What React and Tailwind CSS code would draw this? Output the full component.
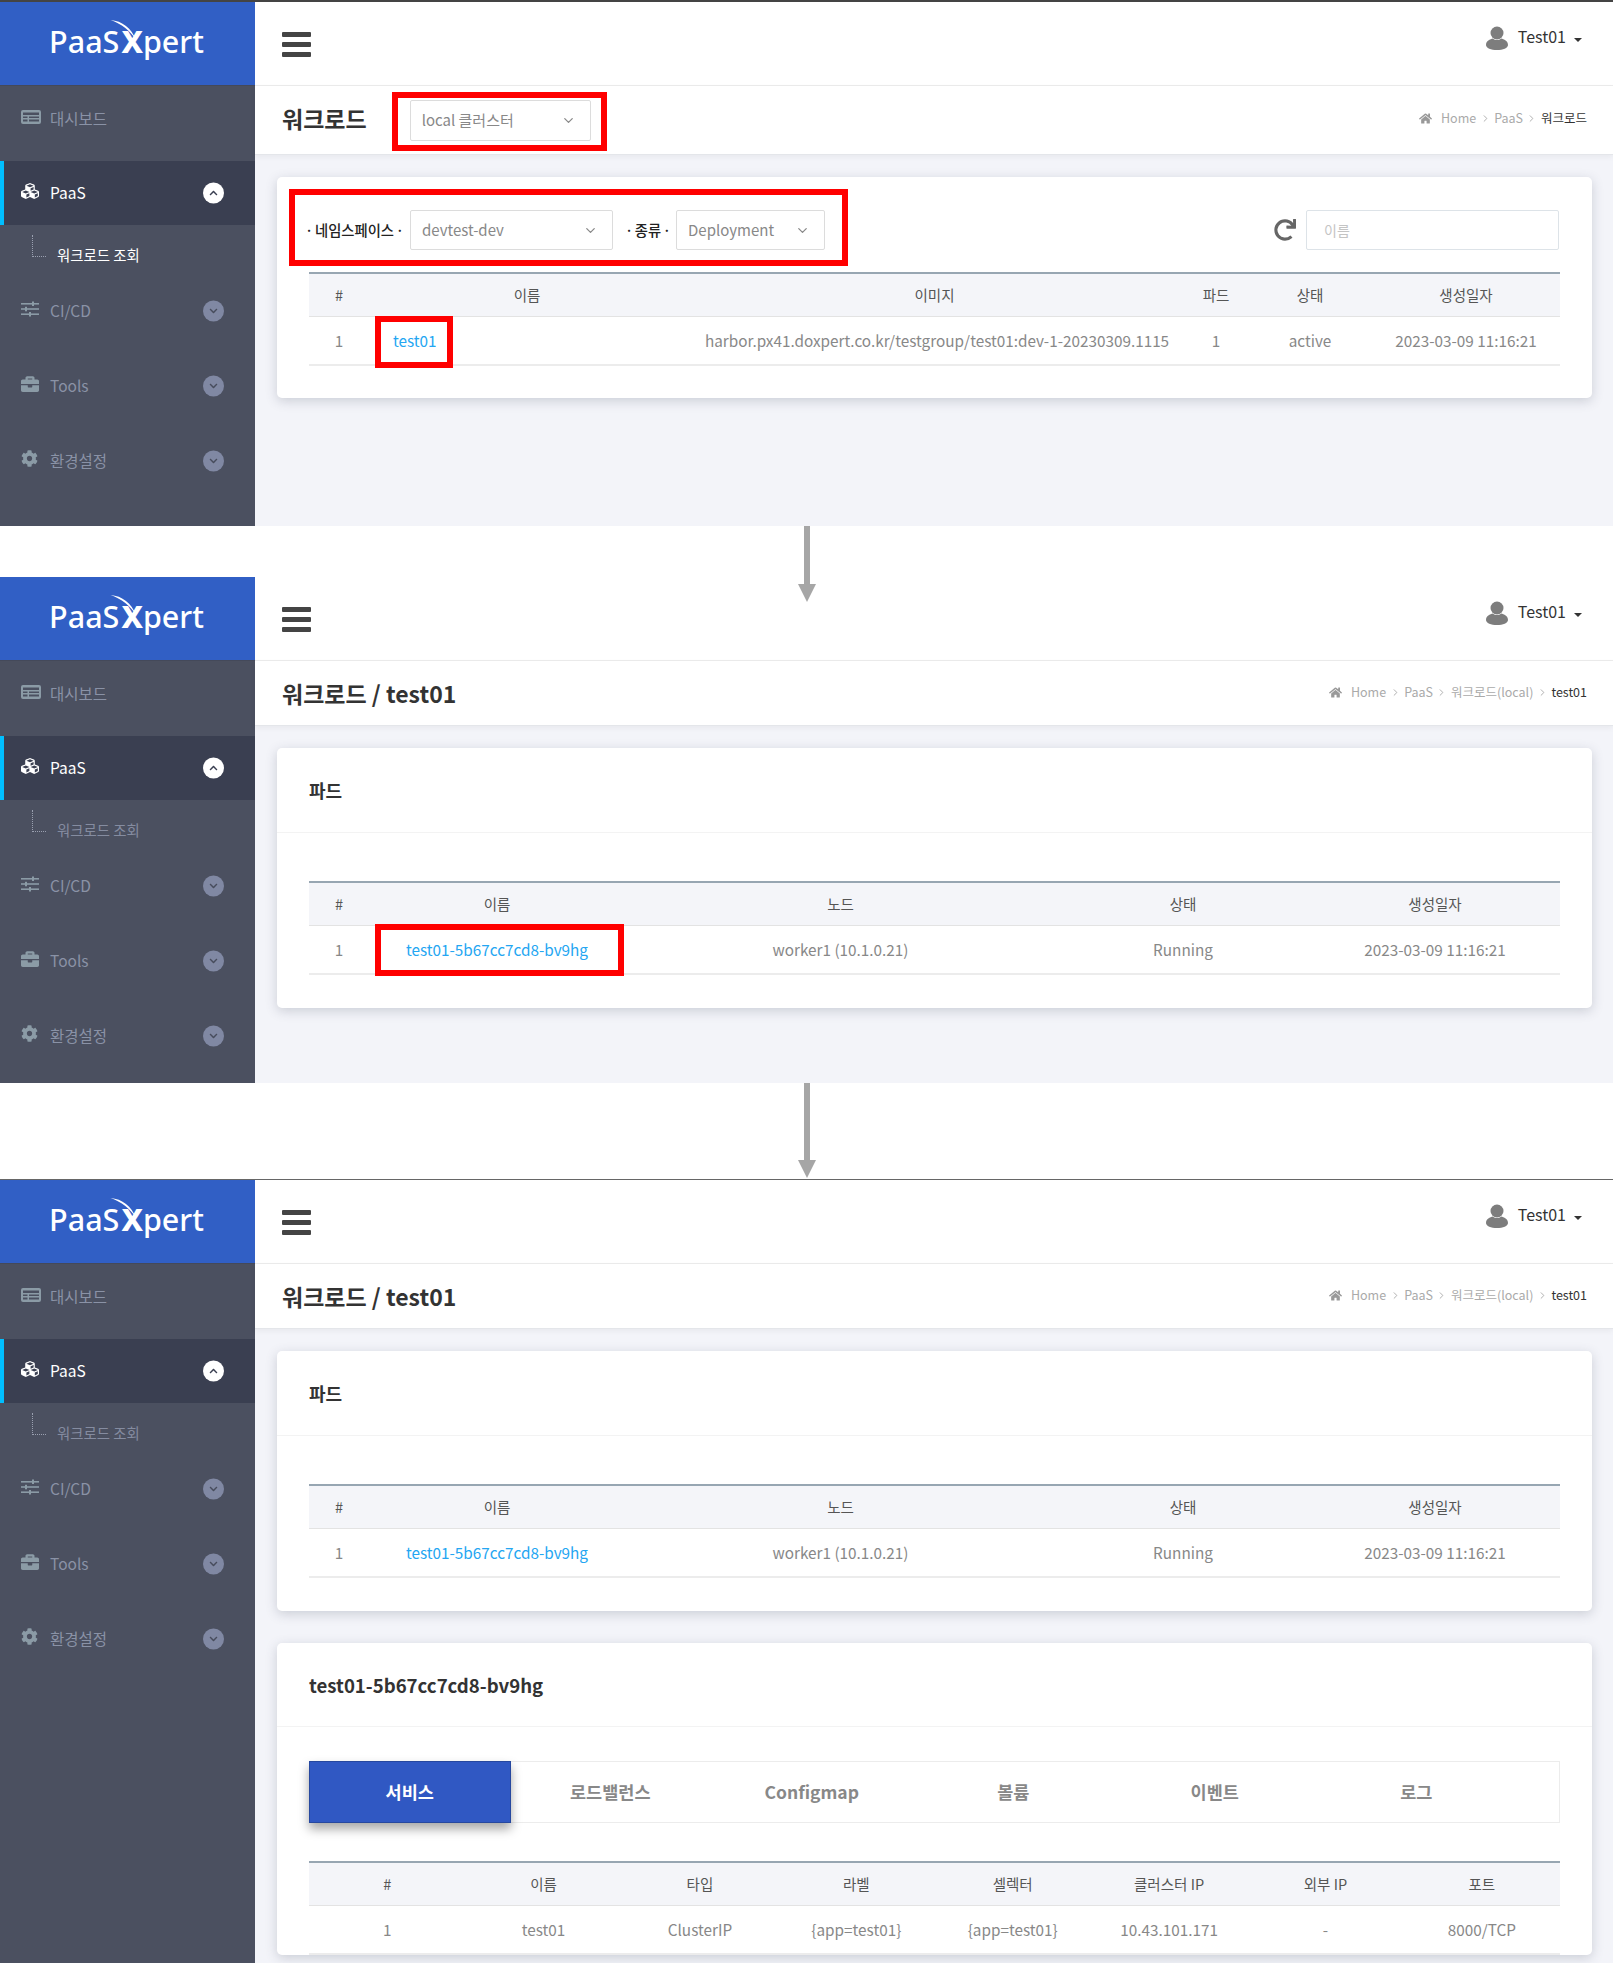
import React from 'react';
import { FaCubes, FaBriefcase, FaCog, FaHome, FaRedo, FaChevronUp, FaChevronDown } from 'react-icons/fa';
import { FiChevronDown, FiChevronRight } from 'react-icons/fi';

const POD_NAME = 'test01-5b67cc7cd8-bv9hg';

function RedFrame({ className }) {
  return <div className={`absolute border-[6px] border-[#ff0000] pointer-events-none z-10 ${className}`} />;
}

function Logo() {
  return (
    <div className="relative flex items-baseline font-['Noto_Sans',sans-serif] text-white text-[30.5px] font-medium leading-none">
      <span>PaaS</span>
      <span className="font-extrabold text-[31px] ml-[2px]">X</span>
      <span>pert</span>
      <svg className="absolute left-[60px] -top-[7px]" width="34" height="22" viewBox="0 0 36 24">
        <path d="M1 1 C 14 2, 24 10, 29 23 C 23 13, 13 5, 1 1 Z" fill="white" />
      </svg>
    </div>
  );
}

function BoardIcon() {
  return (
    <svg width="20" height="14" viewBox="0 0 20 14" fill="currentColor">
      <path fillRule="evenodd" d="M2 0 H18 A2 2 0 0 1 20 2 V12 A2 2 0 0 1 18 14 H2 A2 2 0 0 1 0 12 V2 A2 2 0 0 1 2 0 Z M2 2.5 V5 H18 V2.5 Z M2 6.5 V8 H6.5 V6.5 Z M8 6.5 V8 H18 V6.5 Z M2 9.5 V11.5 H6.5 V9.5 Z M8 9.5 V11.5 H18 V9.5 Z" />
    </svg>
  );
}

function SlidersIcon() {
  return (
    <svg width="18" height="16" viewBox="0 0 18 16" fill="currentColor">
      <rect x="0" y="2" width="18" height="1.6" />
      <rect x="11" y="0.5" width="2" height="4.5" />
      <rect x="0" y="7.2" width="18" height="1.6" />
      <rect x="4" y="5.8" width="2" height="4.5" />
      <rect x="0" y="12.4" width="18" height="1.6" />
      <rect x="8" y="11" width="2" height="4.5" />
    </svg>
  );
}

function NavChevron() {
  return (
    <span className="absolute left-[203px] top-1/2 -translate-y-1/2 w-[21px] h-[21px] rounded-full flex items-center justify-center bg-[#8088a3] text-[#474c5c]">
      <FaChevronDown size={9} />
    </span>
  );
}

function NavItem({ icon, label, chevron }) {
  return (
    <div className="relative h-[75px] flex items-center pb-[9px] pl-[21px]">
      <span className="w-[29px] -mt-[5px] text-[#8b9ba6]">{icon}</span>
      <span className="text-[15.5px] text-[#8a92a6]">{label}</span>
      {chevron && <div className="absolute inset-x-0 top-0 bottom-[9px]"><NavChevron /></div>}
    </div>
  );
}

function Sidebar({ subActive }) {
  return (
    <aside className="w-[255px] shrink-0 bg-[#4b5060] flex flex-col">
      <div className="h-[84px] bg-[#315fc5] flex items-center justify-center border-b border-[#44495a] pr-[2px] pb-[5px]">
        <Logo />
      </div>
      <NavItem icon={<BoardIcon />} label="대시보드" />
      <div className="relative h-[64px] bg-[#3a3f51] border-l-[4px] border-[#00bfff] flex items-center pl-[17px]">
        <span className="w-[29px] -mt-[5px] text-white"><FaCubes size={18} /></span>
        <span className="text-[15.5px] text-white">PaaS</span>
        <span className="absolute left-[199px] top-1/2 -translate-y-1/2 w-[21px] h-[21px] rounded-full bg-white text-[#3a3f51] flex items-center justify-center">
          <FaChevronUp size={9} />
        </span>
      </div>
      <div className="h-[53px] flex pl-[32px] pt-[10px]">
        <div className="w-[14px] h-[22px] border-l border-b border-dotted border-[#9aa0b0]" />
        <span className={`ml-[11px] mt-[10px] text-[14.4px] leading-[20px] ${subActive ? 'text-white' : 'text-[#858ca0]'}`}>워크로드 조회</span>
      </div>
      <NavItem icon={<SlidersIcon />} label="CI/CD" chevron />
      <NavItem icon={<FaBriefcase size={18} />} label="Tools" chevron />
      <NavItem icon={<FaCog size={17} />} label="환경설정" chevron />
    </aside>
  );
}

function TopBar() {
  return (
    <header className="h-[84px] bg-white border-b border-[#ececec] flex justify-between pl-[27px] pr-[31px]">
      <div className="mt-[30px] w-[29px] flex flex-col gap-[5px]">
        <div className="h-[5px] rounded-[1px] bg-[#444]" />
        <div className="h-[5px] rounded-[1px] bg-[#444]" />
        <div className="h-[5px] rounded-[1px] bg-[#444]" />
      </div>
      <div className="mt-[24px] h-[24px] flex items-center">
        <svg width="24" height="24" viewBox="0 0 24 24" className="text-[#7d7d7d]">
          <circle cx="12" cy="7" r="6.5" fill="currentColor" />
          <path d="M1 19 C1 15 5 13 8 12.5 C10 14.5 14 14.5 16 12.5 C19 13 23 15 23 19 C23 22 18 24 12 24 C6 24 1 22 1 19 Z" fill="currentColor" />
        </svg>
        <span className="ml-[9px] -mt-[4px] text-[16px] text-[#333]">Test01</span>
        <span className="ml-[8px] mt-[3px] w-0 h-0 border-x-[4px] border-x-transparent border-t-[4px] border-t-[#333]" />
      </div>
    </header>
  );
}

function Crumbs({ items, current }) {
  return (
    <div className="flex items-center text-[12.5px] text-[#aaa] -mt-[1px]">
      <FaHome size={13} className="mr-[9px] text-[#999]" />
      {items.map((item) => (
        <React.Fragment key={item}>
          <span>{item}</span>
          <FiChevronRight size={11} className="mx-[3.5px]" />
        </React.Fragment>
      ))}
      <span className="text-[#333]">{current}</span>
    </div>
  );
}

function Select({ value, className }) {
  return (
    <div className={`h-[40px] bg-white border border-[#dcdcdc] rounded-[2px] flex items-center justify-between pl-[11px] pr-[14px] text-[15px] text-[#888] ${className}`}>
      <span>{value}</span>
      <FiChevronDown size={15} />
    </div>
  );
}

function TitleBar({ title, height, crumbs, current, lifted, children }) {
  return (
    <div className={`bg-white border-b border-[#e4e6ea] shadow-[0_2px_6px_rgba(0,0,0,0.05)] flex items-center justify-between pl-[27px] pr-[26px] ${height}`}>
      <div className="flex items-center">
        <h1 className={`text-[23px] font-bold text-[#333] ${lifted ? '-mt-[4px]' : ''}`}>{title}</h1>
        {children}
      </div>
      <div className={lifted ? '-mt-[2px]' : ''}>
        <Crumbs items={crumbs} current={current} />
      </div>
    </div>
  );
}

function Card({ children }) {
  return (
    <section className="relative bg-white rounded-[5px] shadow-[0_3px_12px_rgba(60,70,90,0.22)]">
      {children}
    </section>
  );
}

function CardHead({ title, height, size }) {
  return (
    <div className={`border-b border-[#f3f3f3] flex items-center pl-[32px] font-bold text-[#333] ${size} ${height}`}>
      {title}
    </div>
  );
}

function DataTable({ widths, heads, children }) {
  return (
    <table className="w-full table-fixed border-collapse">
      <colgroup>
        {widths.map((w, i) => <col key={i} className={w} />)}
      </colgroup>
      <thead>
        <tr className="h-[43px] bg-[#f4f5f9] border-t-2 border-[#97a6b2] border-b border-b-[#e3e3e3]">
          {heads.map((h) => <th key={h} className="pt-[1px] text-[14.5px] font-normal text-[#555]">{h}</th>)}
        </tr>
      </thead>
      <tbody>
        <tr className="h-[49px] border-b-2 border-[#ececec] text-center text-[15.3px] text-[#888]">{children}</tr>
      </tbody>
    </table>
  );
}

const podWidths = ['w-[60px]', 'w-[256px]', 'w-[431px]', 'w-[254px]', 'w-[250px]'];

function PodCard({ framed }) {
  return (
    <Card>
      <CardHead title="파드" height="h-[85px]" size="text-[18px]" />
      <div className="px-[32px] pt-[48px] pb-[33px]">
        <DataTable widths={podWidths} heads={['#', '이름', '노드', '상태', '생성일자']}>
          <td>1</td>
          <td>
            <span className="relative inline-block leading-[20px] text-[#24a6f2]">
              {POD_NAME}
              {framed && <RedFrame className="-left-[31px] -right-[36px] -top-[15px] -bottom-[17px]" />}
            </span>
          </td>
          <td>worker1 (10.1.0.21)</td>
          <td>Running</td>
          <td>2023-03-09 11:16:21</td>
        </DataTable>
      </div>
    </Card>
  );
}

function FilterLabel({ text, className }) {
  return (
    <span className={`flex items-center justify-between text-[14.3px] font-medium text-[#222] whitespace-nowrap ${className}`}>
      <span>·</span>
      <span>{text}</span>
      <span>·</span>
    </span>
  );
}

function FilterCard() {
  return (
    <Card>
      <RedFrame className="left-[12px] top-[12px] w-[559px] h-[77px]" />
      <div className="px-[32px] pt-[33px] pb-[32px]">
        <div className="flex items-center mb-[22px] h-[40px]">
          <FilterLabel text="네임스페이스" className="w-[99px] -ml-[4px] mr-[6px]" />
          <Select value="devtest-dev" className="w-[203px]" />
          <FilterLabel text="종류" className="w-[46px] ml-[12px] mr-[5px]" />
          <Select value="Deployment" className="w-[149px]" />
          <FaRedo size={22} className="ml-auto mr-[10px] text-[#666]" />
          <div className="w-[253px] h-[40px] border border-[#dde3e8] rounded-[2px] px-[17px] flex items-center text-[14px] text-[#c4c4c4] mr-[1px]">이름</div>
        </div>
        <DataTable
          widths={['w-[60px]', 'w-[316px]', 'w-[499px]', 'w-[64px]', 'w-[124px]', 'w-[188px]']}
          heads={['#', '이름', '이미지', '파드', '상태', '생성일자']}
        >
          <td>1</td>
          <td className="text-left pl-[24px]">
            <span className="relative inline-block leading-[20px] text-[#24a6f2]">
              test01
              <RedFrame className="-left-[18px] -right-[16px] -top-[14px] -bottom-[18px]" />
            </span>
          </td>
          <td className="whitespace-nowrap pl-[5px]">harbor.px41.doxpert.co.kr/testgroup/test01:dev-1-20230309.1115</td>
          <td>1</td>
          <td>active</td>
          <td>2023-03-09 11:16:21</td>
        </DataTable>
      </div>
    </Card>
  );
}

const tabs = ['서비스', '로드밸런스', 'Configmap', '볼륨', '이벤트', '로그'];

function DetailCard() {
  return (
    <Card>
      <CardHead title={POD_NAME} height="h-[84px]" size="text-[18.6px]" />
      <div className="px-[32px] pt-[34px]">
        <div className="h-[62px] flex border border-[#ececec] mb-[38px]">
          {tabs.map((t, i) => (
            <div
              key={t}
              className={`w-[201.5px] flex items-center justify-center text-[17.5px] font-bold ${i === 0 ? 'bg-[#3058c3] border border-[#26489f] text-white shadow-[0_6px_10px_rgba(0,0,0,0.35)] -m-px' : 'text-[#888]'}`}
            >
              {t}
            </div>
          ))}
        </div>
        <DataTable
          widths={['w-[12.5%]', 'w-[12.5%]', 'w-[12.5%]', 'w-[12.5%]', 'w-[12.5%]', 'w-[12.5%]', 'w-[12.5%]', 'w-[12.5%]']}
          heads={['#', '이름', '타입', '라벨', '셀렉터', '클러스터 IP', '외부 IP', '포트']}
        >
          <td>1</td>
          <td>test01</td>
          <td>ClusterIP</td>
          <td>{'{app=test01}'}</td>
          <td>{'{app=test01}'}</td>
          <td>10.43.101.171</td>
          <td>-</td>
          <td>8000/TCP</td>
        </DataTable>
      </div>
    </Card>
  );
}

function Screen({ outer, subActive, titleProps, children, titleExtra }) {
  return (
    <div className={`flex overflow-hidden bg-[#f3f4f9] ${outer}`}>
      <Sidebar subActive={subActive} />
      <main className="flex-1 min-w-0">
        <TopBar />
        <TitleBar {...titleProps}>{titleExtra}</TitleBar>
        <div className="pl-[22px] pr-[21px] pt-[22px]">{children}</div>
      </main>
    </div>
  );
}

function Arrow({ gap, length, headStart }) {
  return (
    <div className={`relative bg-white ${gap}`}>
      <svg className="absolute left-[798px] top-0 z-20" width="18" height={length} viewBox={`0 0 18 ${length}`}>
        <rect x="6" y="0" width="6" height={headStart} fill="#a6a6a6" />
        <polygon points={`0,${headStart} 18,${headStart} 9,${length}`} fill="#a6a6a6" />
      </svg>
    </div>
  );
}

export default function App() {
  const detailCrumbs = { crumbs: ['Home', 'PaaS', '워크로드(local)'], current: 'test01', title: '워크로드 / test01', height: 'h-[65px]' };
  return (
    <div className="w-full overflow-hidden bg-white font-['Noto_Sans_CJK_KR','Noto_Sans',sans-serif]">
      <Screen
        outer="h-[526px] border-t-2 border-[#444]"
        subActive
        titleProps={{ title: '워크로드', height: 'h-[69px]', crumbs: ['Home', 'PaaS'], current: '워크로드', lifted: true }}
        titleExtra={
          <div className="relative ml-[43px]">
            <Select value="local 클러스터" className="w-[181px] h-[41px]" />
            <RedFrame className="-left-[18px] -right-[16px] -top-[8px] -bottom-[10px]" />
          </div>
        }
      >
        <FilterCard />
      </Screen>
      <Arrow gap="h-[51px]" length={76} headStart={58} />
      <Screen outer="h-[506px]" titleProps={detailCrumbs}>
        <PodCard framed />
      </Screen>
      <Arrow gap="h-[96px]" length={95} headStart={77} />
      <Screen outer="h-[784px] border-t border-[#666]" titleProps={detailCrumbs}>
        <PodCard />
        <div className="mt-[32px]"><DetailCard /></div>
      </Screen>
    </div>
  );
}
